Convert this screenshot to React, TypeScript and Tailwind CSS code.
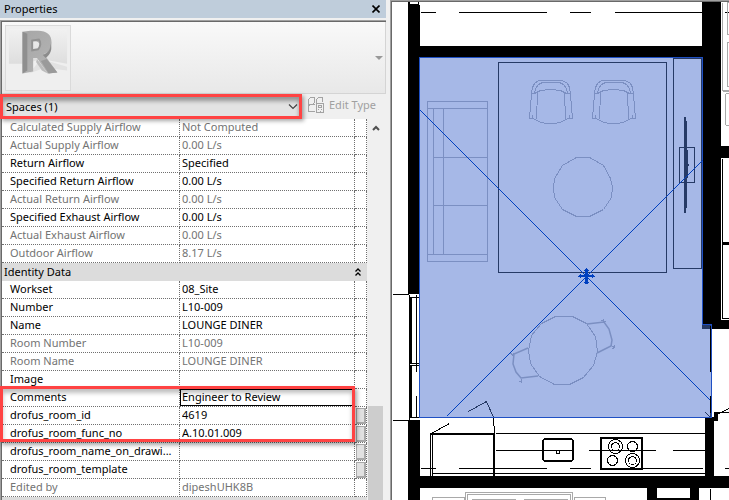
import type { ReactNode } from 'react'

type Row = {
  id: string
  name: string
  value: string
  readOnly?: boolean
  picker?: boolean
}

const airflow: Row[] = [
  { id: 'calc-supply', name: 'Calculated Supply Airflow', value: 'Not Computed', readOnly: true },
  { id: 'actual-supply', name: 'Actual Supply Airflow', value: '0.00 L/s', readOnly: true },
  { id: 'return', name: 'Return Airflow', value: 'Specified' },
  { id: 'spec-return', name: 'Specified Return Airflow', value: '0.00 L/s' },
  { id: 'actual-return', name: 'Actual Return Airflow', value: '0.00 L/s', readOnly: true },
  { id: 'spec-exhaust', name: 'Specified Exhaust Airflow', value: '0.00 L/s' },
  { id: 'actual-exhaust', name: 'Actual Exhaust Airflow', value: '0.00 L/s', readOnly: true },
  { id: 'outdoor', name: 'Outdoor Airflow', value: '8.17 L/s', readOnly: true },
]

const identity: Row[] = [
  { id: 'workset', name: 'Workset', value: '08_Site' },
  { id: 'number', name: 'Number', value: 'L10-009' },
  { id: 'name', name: 'Name', value: 'LOUNGE DINER' },
  { id: 'room-number', name: 'Room Number', value: 'L10-009', readOnly: true },
  { id: 'room-name', name: 'Room Name', value: 'LOUNGE DINER', readOnly: true },
  { id: 'image', name: 'Image', value: '' },
  { id: 'comments', name: 'Comments', value: 'Engineer to Review' },
  { id: 'drofus-id', name: 'drofus_room_id', value: '4619', picker: true },
  { id: 'drofus-func', name: 'drofus_room_func_no', value: 'A.10.01.009', picker: true },
  { id: 'drofus-drawing', name: 'drofus_room_name_on_drawi...', value: '', picker: true },
  { id: 'drofus-template', name: 'drofus_room_template', value: '', picker: true },
  { id: 'edited', name: 'Edited by', value: 'dipeshUHK8B', readOnly: true },
]

function PropertyRow({ row }: { row: Row }) {
  const color = row.readOnly ? 'text-[#737373]' : 'text-black'
  const active = row.id === 'comments'
  return (
    <tr className={`h-[18px] ${color}`}>
      <th
        scope="row"
        className="h-[18px] border-r border-b border-dotted border-[#707070] p-0 pl-2 text-left align-top leading-4 font-normal whitespace-nowrap"
      >
        {row.readOnly ? row.name : <label htmlFor={row.id}>{row.name}</label>}
      </th>
      <td className="h-[18px] border-r border-b border-dotted border-[#707070] p-0 align-top leading-4">
        {row.readOnly ? (
          <span className="block pl-0.5">{row.value}</span>
        ) : (
          <input
            id={row.id}
            defaultValue={row.value}
            className={`block h-[17px] w-full bg-transparent pb-0.5 pl-0.5 outline-none ${
              active ? 'shadow-[inset_0_0_0_1px_black]' : ''
            }`}
          />
        )}
      </td>
      <td className="h-[18px] border-r border-b border-dotted border-[#707070] p-0">
        {row.picker && (
          <button
            aria-label={`Browse ${row.name}`}
            className="mx-auto block h-4 w-[10px] border border-r-2 border-b-2 border-[#a8a8a8] bg-[#e1e1e1]"
          />
        )}
      </td>
    </tr>
  )
}

function RevitLogo() {
  return (
    <svg viewBox="0 0 66 66" className="size-full" aria-hidden="true">
      <defs>
        <linearGradient id="face" x1="0" y1="0" x2="1" y2="1">
          <stop offset="0" stopColor="#a6a6a6" />
          <stop offset="1" stopColor="#b6b6b6" />
        </linearGradient>
        <linearGradient id="back" x1="0" y1="0" x2="0" y2="1">
          <stop offset="0" stopColor="#f1f1f1" />
          <stop offset="1" stopColor="#dedede" />
        </linearGradient>
      </defs>
      <path d="M3 3h60v36L36 34 20 39H3z" fill="url(#back)" />
      <path d="M24 49l12-15 27 8v4L40 43z" fill="#e2e2e2" />
      <path
        fillRule="evenodd"
        d="M17 6l8-1h8c9 0 14 4 14 12 0 6-2 10-8 12l14 19-10 1-11-16h-4v14l-11 2zm10 10v9c6 0 8-2 8-5s-3-5-8-4z"
        fill="url(#face)"
      />
      <path d="M17 6l5 2v38l-5 3z" fill="#8f8f8f" />
      <path d="M27 15l7-1c2 2 2 7-1 10l-6 1z" fill="none" stroke="#929292" strokeWidth="2" />
      <path d="M38 30c6-3 8-6 8-12 2 6 0 11-5 15z" fill="#8c8c8c" />
      <path d="M36 36l6-2 11 14-9 1z" fill="#9a9a9a" />
      <path d="M32 34l11 15-6-3-6-9z" fill="#bdbdbd" />
    </svg>
  )
}

function EditTypeIcon() {
  return (
    <svg
      viewBox="0 0 16 16"
      className="size-4"
      fill="none"
      stroke="#a3a3a3"
      shapeRendering="crispEdges"
      aria-hidden="true"
    >
      <path d="M.5 7.5v-5l2-2h4v5l-2 2zM8.5 5.5v-3l2-2h4v4M.5 7.5v7h6v-1M.5 9.5l2-2h4M8.5 6.5h7v9h-7z" />
      <path d="M10.5 8.5h3v2h-3zM10 12.5h1M13 12.5h1M12 14.5h1" />
    </svg>
  )
}

function PropertiesPalette() {
  return (
    <section
      aria-label="Properties"
      className="relative flex min-w-0 flex-col bg-[#f0f0f0] pr-1 text-[11px] leading-4"
    >
      <header className="flex h-[18px] items-center justify-between bg-[#bfcddb] pr-[5px] pl-1">
        <h1>Properties</h1>
        <button aria-label="Close" className="flex size-[10px] items-center justify-center">
          <svg viewBox="0 0 8 8" className="size-2" stroke="#000" strokeWidth="1.6" aria-hidden="true">
            <path d="M.5.5l7 7M7.5.5l-7 7" />
          </svg>
        </button>
      </header>

      <div className="mt-0.5 flex flex-1 flex-col border-t border-l border-[#a0a0a0]">
        <div className="flex flex-1 flex-col border-t border-l border-[#696969]">
          <div className="flex h-[72px] items-center justify-between border-r border-b border-[#d4d4d4] bg-linear-to-b from-[#f9f9f9] to-[#e8e8e8] pr-0.5 pl-[3px]">
            <div className="size-[66px] border border-[#dadada] bg-[#efefef]">
              <RevitLogo />
            </div>
            <button aria-label="Change type" className="flex h-4 w-2 items-center">
              <svg viewBox="0 0 8 4" className="h-1 w-2" fill="#999" aria-hidden="true">
                <path d="M0 0h8L4 4z" />
              </svg>
            </button>
          </div>

          <div className="flex h-[25px] items-center">
            <div className="relative h-full min-w-0 flex-1 bg-[#e3e3e3]">
              <select
                aria-label="Selection filter"
                className="h-full w-full appearance-none bg-transparent pl-1 outline-none"
              >
                <option>Spaces (1)</option>
              </select>
              <svg
                viewBox="0 0 10 6"
                className="pointer-events-none absolute top-[10px] right-1 h-1.5 w-[10px]"
                fill="none"
                stroke="#444"
                strokeWidth="1.2"
                aria-hidden="true"
              >
                <path d="M1 .5l4 4 4-4" />
              </svg>
              <div className="pointer-events-none absolute top-0 right-0 bottom-0 -left-0.5 border-[3px] border-[#ff4343] shadow-[inset_0_4px_4px_rgba(0,0,0,0.35),2px_2px_4px_rgba(0,0,0,0.35)]" />
            </div>
            <button className="flex h-full w-[84px] items-center gap-[5px] pb-1 pl-1.5 whitespace-nowrap text-[#a0a0a0]">
              <EditTypeIcon />
              Edit Type
            </button>
          </div>

          <div className="flex flex-1">
            <div className="min-w-0 flex-1 bg-[#dcdcdc]">
              <table className="w-full table-fixed border-separate border-spacing-0 bg-white">
                <colgroup>
                  <col className="w-[178px]" />
                  <col />
                  <col className="w-[12px]" />
                </colgroup>
                <tbody>
                  {airflow.map((row) => (
                    <PropertyRow key={row.id} row={row} />
                  ))}
                  <tr className="h-[18px]">
                    <th colSpan={3} className="h-[18px] bg-[#dcdcdc] p-0 text-left font-normal">
                      <button className="flex h-[18px] w-full items-center justify-between pr-1.5 pb-px pl-0.5">
                        Identity Data
                        <svg
                          viewBox="0 0 6 8"
                          className="h-2 w-1.5"
                          fill="none"
                          stroke="#000"
                          strokeWidth="1.3"
                          aria-hidden="true"
                        >
                          <path d="M.5 3.5L3 1l2.5 2.5M.5 7.5L3 5l2.5 2.5" />
                        </svg>
                      </button>
                    </th>
                  </tr>
                  {identity.map((row) => (
                    <PropertyRow key={row.id} row={row} />
                  ))}
                </tbody>
              </table>
            </div>
            <div className="mr-[3px] ml-px flex w-[15px] flex-col items-center">
              <button aria-label="Scroll up" className="flex h-[17px] w-full items-center justify-center">
                <svg viewBox="0 0 8 6" className="h-1.5 w-2" fill="none" stroke="#505050" strokeWidth="2" aria-hidden="true">
                  <path d="M1 5l3-3 3 3" />
                </svg>
              </button>
              <div className="mt-[270px] w-full flex-1 bg-[#cdcdcd]" />
            </div>
          </div>
        </div>
      </div>

      {/* callout around the reviewed parameters */}
      <div className="pointer-events-none absolute top-[386px] right-[35px] left-0 h-14 border-[3px] border-[#ff4343] shadow-[inset_0_4px_4px_rgba(0,0,0,0.25),2px_3px_4px_rgba(0,0,0,0.35)]" />
    </section>
  )
}

function Armchair({ x }: { x: number }) {
  return (
    <g transform={`translate(${x} 80)`}>
      <path d="M2 13l1-6 2-4 4-3h24l5 3 2 4 1 7" />
      <path d="M5 13l1-5 3-4 4-2h17l4 2 3 4 1 5" />
      <path d="M2 13h3l6-3 10-1 10 1 6 3h3" />
      <path d="M2 13L0 38h4l5 3 7 2h10l7-2 5-3h5l-2-24M8 12L7 39M35 12l1 27M3 34v4M40 34v4" />
    </g>
  )
}

function Walls() {
  return (
    <g fill="#000">
      <path d="M408 5h12v41h282V2h19v144h8v12h-8v162h8v9h-27V57H420v237h-12z" />
      <path d="M408 2h2v2h8v-2h1v3h-11zM408 420h12v56h285v-59h9v59h15v12H420v12h-12z" />
      <path d="M714 412h4v9h-4zM647 488h10v12h-10zM690 488h9v12h-9zM647 498h52v2h-52z" />
      <path d="M718 412h11v1h-11zM410 297h2v66h-2zM410 366h2v51h-2z" />
    </g>
  )
}

function Lines({ color, width = 1, children }: { color: string; width?: number; children: ReactNode }) {
  return (
    <g fill="none" stroke={color} strokeWidth={width} transform="translate(.5 .5)">
      {children}
    </g>
  )
}

function FloorPlan() {
  return (
    <main className="min-w-0 border-t border-l border-[#a0a0a0] bg-white">
      <div className="h-full border-t border-l border-[#696969]">
        <svg
          viewBox="392 2 337 498"
          className="block w-full"
          shapeRendering="crispEdges"
          role="img"
          aria-label="Floor plan of lounge diner L10-009"
        >
          <path d="M419 57h284v267h8v94H419z" fill="#a6b8e7" />
          <Walls />
          <path d="M702 324h9v5h-9z" fill="#263a66" />

          {/* neighbouring rooms and windows */}
          <Lines color="#000">
            <path d="M420 12h15M458 12h88M569 12h21M614 12h88M724 12h5" />
            <path d="M392 294h16M392 420h16M409 294v126M409 297h10M409 363h10M409 365h10M409 417h10M416 294v77M416 395v22" />
            <path d="M722 158v160M721 318h8M721 243h8M721 242h8M721 244h8" />
            <path d="M710 325v46M710 395v22M710 488v12M718 413l11-5M724 468h5" />
          </Lines>
          <Lines color="#a9a9a9">
            <path d="M722 2v88M722 90h7M722 91h7M729 2h-2v32h2M729 42h-2v44h2M729 93h-3l-1 1v30l1 1h3" />
            <path d="M432 500v-3h32v3M465 500v-8h107v8M467 500v-6h103v6M471 499h44M523 499h44M574 500v-3h31v3" />
          </Lines>

          {/* kitchen */}
          <Lines color="#000">
            <path d="M495 433h210M430 433v42M432 433v42M432 473h273M495 450h76M588 450h67M672 450h33" />
            <path d="M420 468h15M458 468h88M569 468h21M614 468h88" />
            <path d="M431 433l18-10M493 418l1 15" />
            <rect x="556" y="450" width="3" height="3" />
            <circle cx="615" cy="446" r="7" />
            <circle cx="615" cy="446" r="4" />
            <circle cx="632" cy="446" r="5" />
            <circle cx="612" cy="460" r="5" />
            <circle cx="632" cy="460" r="7" />
            <circle cx="632" cy="460" r="4" />
          </Lines>
          <g fill="none" stroke="#000" strokeWidth="2">
            <path d="M430 434h64v42" />
            <rect x="601" y="438" width="41" height="31" />
          </g>
          <rect x="543" y="439" width="30" height="22" rx="3" fill="none" stroke="#000" strokeWidth="1.5" />

          {/* furniture */}
          <Lines color="#7b8fc2">
            <path d="M427 101h60v160h-60zM427 108h60M427 254h60M433 108v146M443 108v146M433 157h54M433 205h54" />
            <Armchair x={529} />
            <Armchair x={592} />
            <path d="M576 157h13l14 8 7 13 2 8-1 11-8 12-14 7h-13l-14-7-8-12-1-10 1-9 8-13z" />
            <path d="M555 316h17l14 7 9 13 2 15-4 14-10 12-14 7h-15l-15-8-9-13-2-13 3-15 10-12z" />
          </Lines>
          <g fill="none" stroke="#7b8fc2" strokeWidth="1.5" shapeRendering="auto">
            <path d="M587 324l17-2 5 7 3 11-1 6-14 7M528 348l-14 6-1 10 3 8 5 6 17-2" />
          </g>
          <Lines color="#7b8fc2">
            <path d="M601 320l5 1M603 318v4M611 345l4 3M614 345l-2 4M510 353l4 2M512 356l1-3M519 381l3 1M521 378v4" />
          </Lines>
          <Lines color="#263a66">
            <path d="M498 62h168v210H498zM673 58h28v210h-28zM679 147h15v35h-15z" />
            <path d="M468 411l18-10 7 16M705 412l5 5M710 412v5h-5" />
          </Lines>
          <path d="M684 117h2v4h1v29h1v14h1v2h-1v12h-1v30h-1v5h-2z" fill="#263a66" />

          {/* selected space */}
          <Lines color="#1f50c4">
            <path d="M419 57h283v267h9v93H419z" />
          </Lines>
          <Lines color="#0040c0">
            <path d="M420 110l290 290M446 416l256-256" />
          </Lines>
          <g fill="#0040c0">
            <path d="M585 269h3v15h-3zM579 275h15v2h-15z" />
            <path d="M586 268h1v1h-1zM584 270h5v1h-5zM584 282h5v1h-5zM580 274h1v4h-1zM592 274h1v4h-1zM578 276h1v1h-1zM594 276h1v1h-1z" />
          </g>
        </svg>
      </div>
    </main>
  )
}

export default function App() {
  return (
    <div className="grid min-h-screen grid-cols-[390fr_339fr] bg-white font-['Noto_Sans','Open_Sans',sans-serif] text-black">
      <PropertiesPalette />
      <FloorPlan />
    </div>
  )
}
